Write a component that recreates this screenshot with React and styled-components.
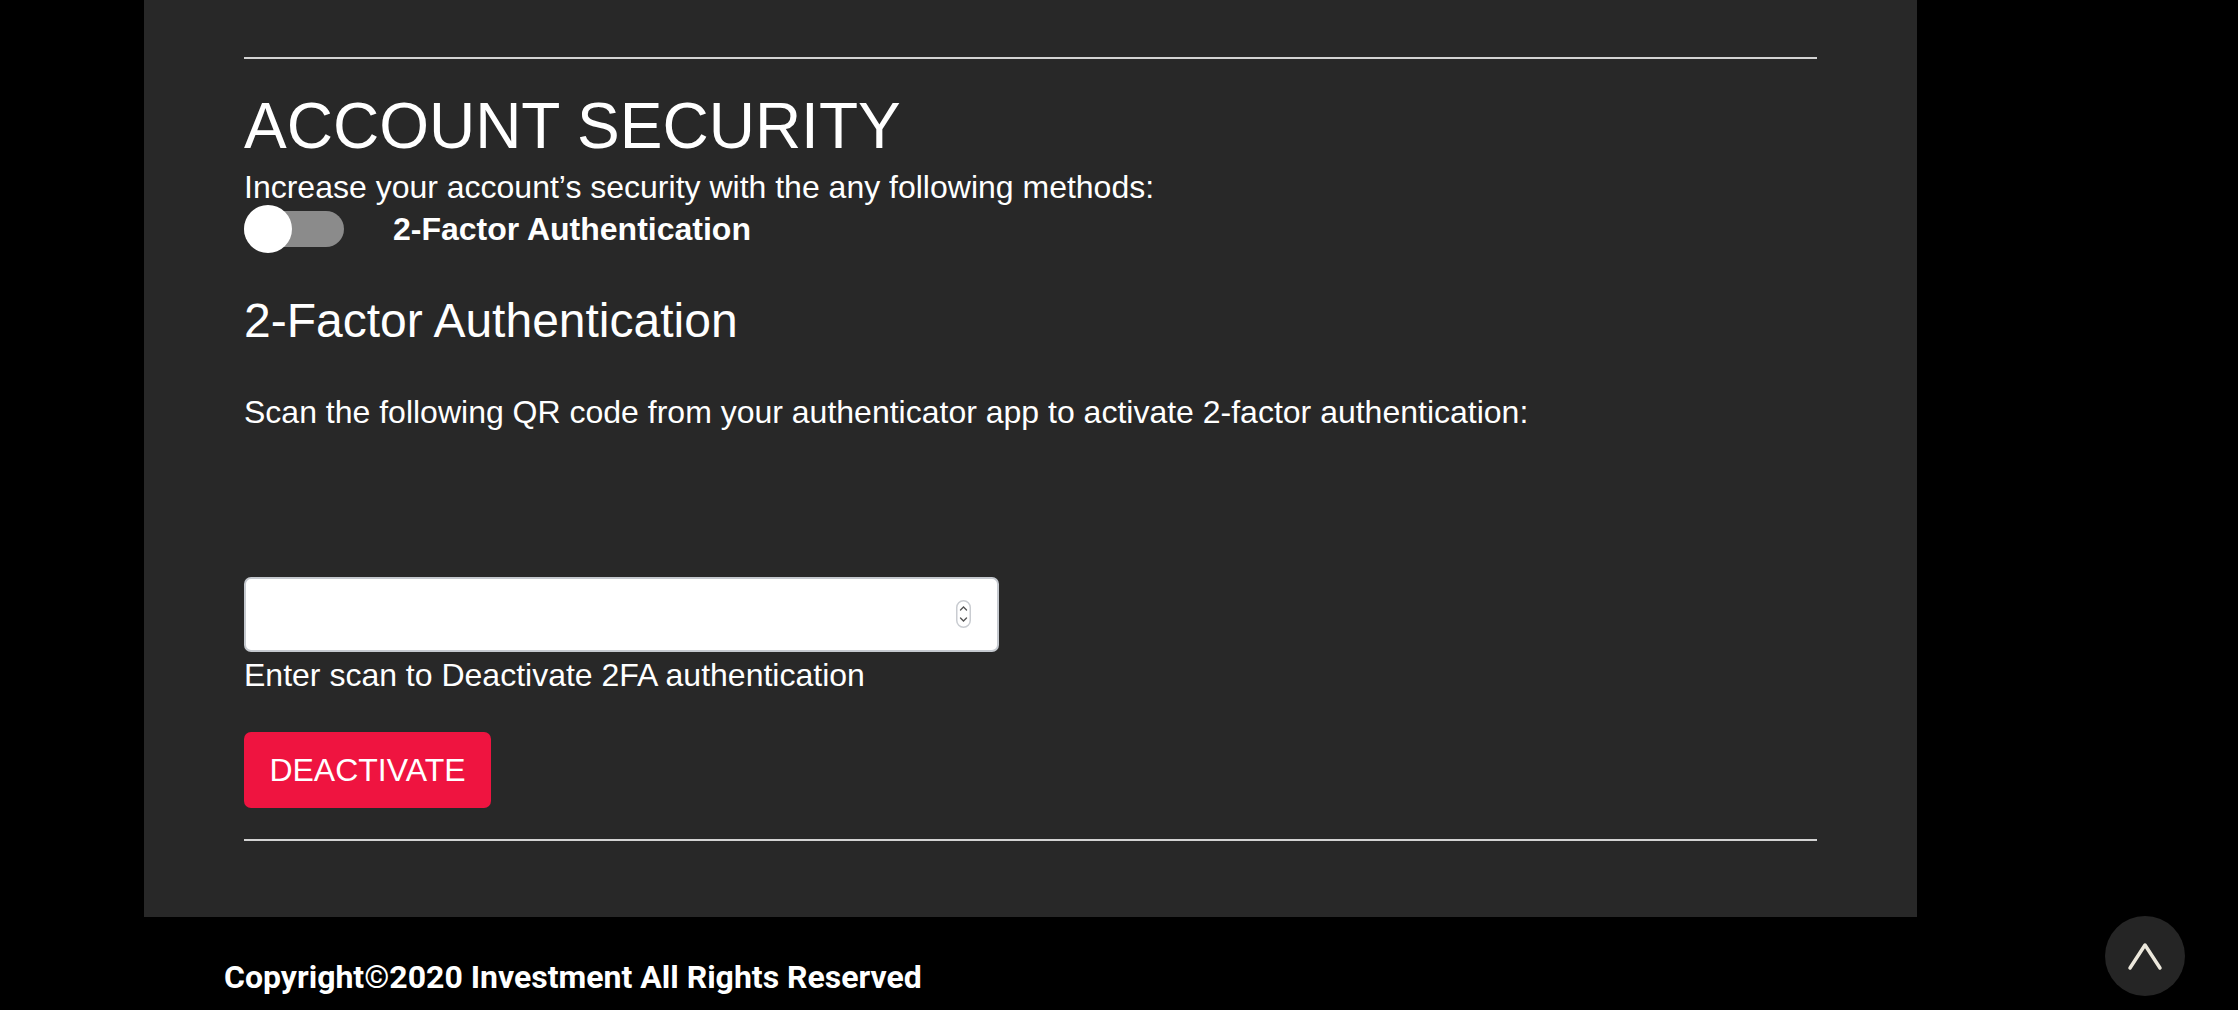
import React from "react";
import styled, { createGlobalStyle } from "styled-components";

const GlobalStyle = createGlobalStyle`
  html, body {
    margin: 0;
    padding: 0;
    background: #000;
  }
  body {
    font-family: "Liberation Sans", Arial, sans-serif;
    color: #fff;
  }
`;

export default function App() {
  return (
    <Page>
      <GlobalStyle />
      <Panel>
        <Divider />
        <Title>ACCOUNT SECURITY</Title>
        <Lead>Increase your account’s security with the any following methods:</Lead>
        <ToggleRow>
          <Switch>
            <Knob />
          </Switch>
          <ToggleLabel>2-Factor Authentication</ToggleLabel>
        </ToggleRow>
        <SectionTitle>2-Factor Authentication</SectionTitle>
        <Text>
          Scan the following QR code from your authenticator app to activate
          2-factor authentication:
        </Text>
        <InputWrap>
          <CodeInput type="text" />
          <Spinner viewBox="0 0 15 28">
            <rect x="0.75" y="0.75" width="13.5" height="26.5" rx="6.75" fill="#fff" stroke="#c9ccd1" strokeWidth="1.5" />
            <path d="M4.5 10 L7.5 7 L10.5 10" fill="none" stroke="#555" strokeWidth="1.4" strokeLinecap="round" />
            <path d="M4.5 18 L7.5 21 L10.5 18" fill="none" stroke="#555" strokeWidth="1.4" strokeLinecap="round" />
          </Spinner>
        </InputWrap>
        <Hint>Enter scan to Deactivate 2FA authentication</Hint>
        <DangerButton>DEACTIVATE</DangerButton>
        <Divider $gap={31} />
      </Panel>
      <Footer>
        <Copyright>Copyright©2020 Investment All Rights Reserved</Copyright>
      </Footer>
      <ScrollTop aria-label="Back to top">
        <svg width="36" height="30" viewBox="0 0 36 30">
          <path d="M3 27 L18 4 L33 27" fill="none" stroke="#ece8dc" strokeWidth="3.5" strokeLinecap="round" strokeLinejoin="round" />
        </svg>
      </ScrollTop>
    </Page>
  );
}

const Page = styled.div`
  min-height: 1010px;
  padding-left: 144px;
  background: #000;
`;

const Panel = styled.section`
  width: 1773px;
  box-sizing: border-box;
  padding: 57px 100px 76px;
  background: #282828;
  display: flex;
  flex-direction: column;
  align-items: flex-start;
`;

const Divider = styled.div`
  align-self: stretch;
  height: 2px;
  margin-top: ${(p) => p.$gap || 0}px;
  background: #d3d3d3;
`;

const Title = styled.h1`
  margin: 31px 0 0;
  font-size: 64px;
  line-height: 72px;
  font-weight: 400;
`;

const Lead = styled.p`
  margin: 7px 0 0;
  font-size: 32px;
  line-height: 36px;
`;

const ToggleRow = styled.div`
  display: flex;
  align-items: center;
  gap: 49px;
  height: 48px;
`;

const Switch = styled.div`
  position: relative;
  width: 100px;
  height: 36px;
  border-radius: 18px;
  background: #8b8b8b;
`;

const Knob = styled.span`
  position: absolute;
  left: 0;
  top: -6px;
  width: 48px;
  height: 48px;
  border-radius: 50%;
  background: #fff;
`;

const ToggleLabel = styled.span`
  font-size: 32px;
  font-weight: 700;
`;

const SectionTitle = styled.h2`
  margin: 40px 0 0;
  font-size: 48px;
  line-height: 56px;
  font-weight: 400;
`;

const Text = styled.p`
  margin: 45px 0 0;
  font-size: 32px;
  line-height: 36px;
`;

const InputWrap = styled.div`
  position: relative;
  margin-top: 147px;
`;

const CodeInput = styled.input`
  display: block;
  width: 755px;
  height: 75px;
  box-sizing: border-box;
  border: 2px solid #c5c9cf;
  border-radius: 7px;
  background: #fff;
  font-size: 32px;
  padding: 0 20px;
  outline: none;
`;

const Spinner = styled.svg`
  position: absolute;
  right: 28px;
  top: 23px;
  width: 15px;
  height: 28px;
`;

const Hint = styled.p`
  margin: 5px 0 0;
  font-size: 32px;
  line-height: 36px;
`;

const DangerButton = styled.button`
  margin-top: 39px;
  width: 247px;
  height: 76px;
  border: none;
  border-radius: 7px;
  background: #ef1440;
  color: #fff;
  font-family: "Liberation Sans", Arial, sans-serif;
  font-size: 32px;
  cursor: pointer;
`;

const Footer = styled.footer`
  padding: 41px 0 0 80px;
  height: 94px;
  box-sizing: border-box;
`;

const Copyright = styled.p`
  margin: 0;
  font-family: Roboto, "Liberation Sans", sans-serif;
  font-weight: 700;
  font-size: 32px;
  line-height: 38px;
`;

const ScrollTop = styled.button`
  position: fixed;
  right: 53px;
  bottom: 14px;
  width: 80px;
  height: 80px;
  border: none;
  border-radius: 50%;
  background: #252525;
  display: flex;
  align-items: center;
  justify-content: center;
  padding: 0;
  cursor: pointer;
`;
